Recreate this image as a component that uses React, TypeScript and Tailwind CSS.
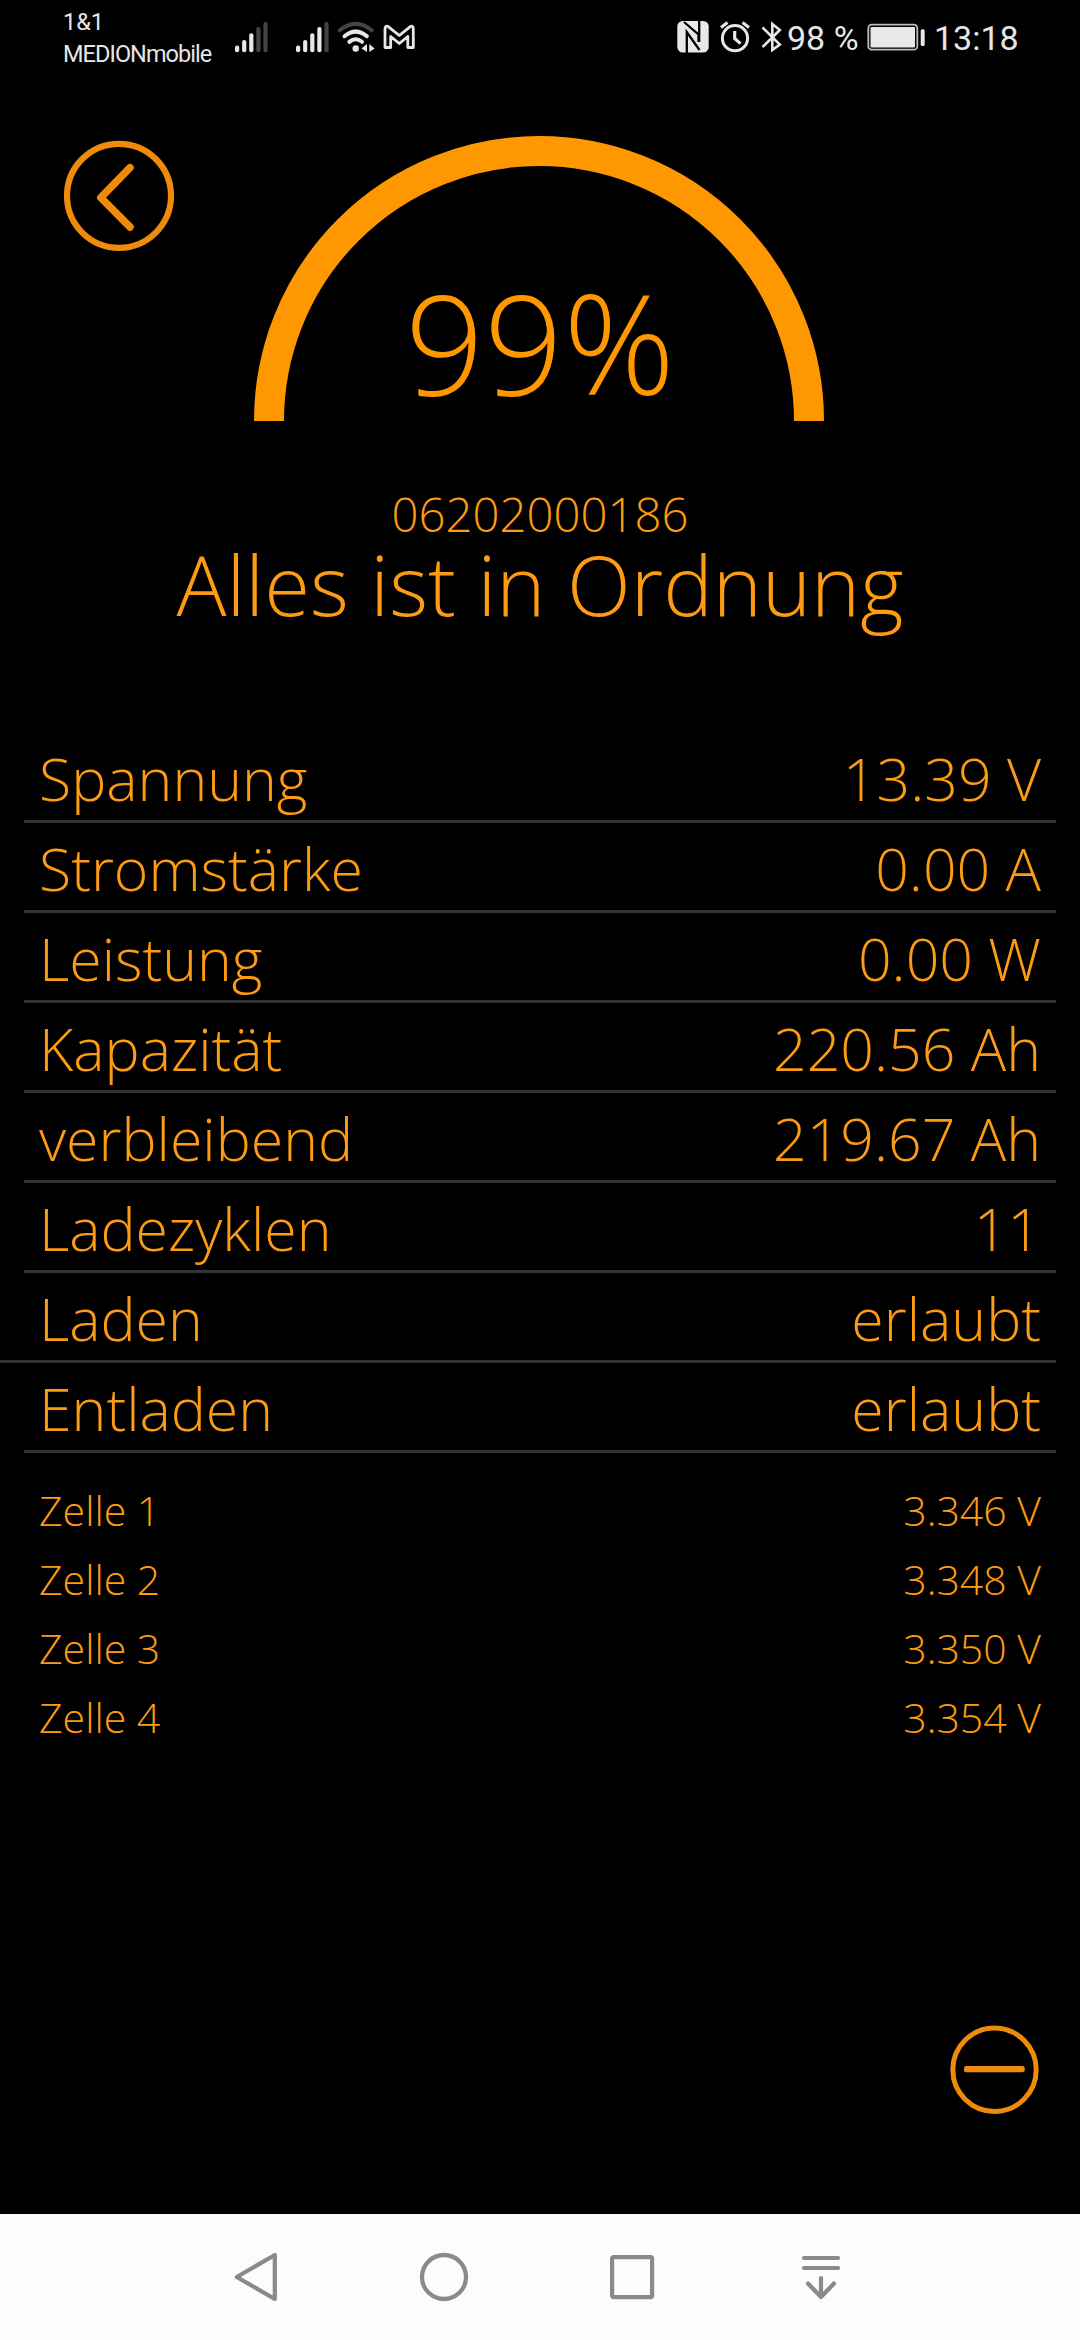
import type { ReactNode } from 'react';

const READINGS = [
  { label: 'Spannung', value: '13.39 V' },
  { label: 'Stromstärke', value: '0.00 A' },
  { label: 'Leistung', value: '0.00 W' },
  { label: 'Kapazität', value: '220.56 Ah' },
  { label: 'verbleibend', value: '219.67 Ah' },
  { label: 'Ladezyklen', value: '11' },
  { label: 'Laden', value: 'erlaubt', fullBleed: true },
  { label: 'Entladen', value: 'erlaubt' },
];

const CELLS = [
  { label: 'Zelle 1', value: '3.346 V' },
  { label: 'Zelle 2', value: '3.348 V' },
  { label: 'Zelle 3', value: '3.350 V' },
  { label: 'Zelle 4', value: '3.354 V' },
];

const SIGNAL_TOPS = [45.5, 40, 33.3, 27, 22];

function Signal({ level }: { level: number }) {
  return (
    <svg width="33" height="76" viewBox="0 0 33 76">
      {SIGNAL_TOPS.map((top, i) => (
        <rect
          key={top}
          x={i * 7.1}
          y={top}
          width="4.2"
          height={52.3 - top}
          rx="2"
          fill={i < level ? '#e8e8e8' : '#444'}
        />
      ))}
    </svg>
  );
}

function StatusBar() {
  return (
    <div className="flex h-[76px] items-center pl-[63px] font-[Roboto,sans-serif] font-normal text-[#e6e6e6]">
      <div className="w-[172px] text-[23.5px] leading-8 whitespace-nowrap">
        <div>1&amp;1</div>
        <div className="tracking-[-0.95px]">MEDIONmobile</div>
      </div>
      <Signal level={3} />
      <div className="ml-7">
        <Signal level={4} />
      </div>

      {/* Wi-Fi with traffic arrows */}
      <svg className="ml-2" width="38" height="76" viewBox="0 0 38 76" fill="none" strokeWidth="4" strokeLinecap="round">
        <path d="M2.7 30.3Q18.7 17.5 34.7 30.3" stroke="#444" />
        <path d="M7.5 36.2Q18.7 27 29.9 36.2" stroke="#e8e8e8" />
        <path d="M12.3 41.8Q18.7 36.8 25 41.8" stroke="#e8e8e8" />
        <circle cx="18.7" cy="48.5" r="3.2" fill="#e8e8e8" />
        <path d="M30 44V52L24.5 48.6ZM32.3 44V52L37.6 48.6Z" fill="#e8e8e8" />
      </svg>

      {/* Mail */}
      <svg className="ml-2" width="33" height="76" viewBox="0 0 33 76" fill="none" stroke="#e8e8e8" strokeWidth="2.8" strokeLinejoin="round">
        <path d="M2 47.5V29Q2 25 5.5 26.8L16.3 35.5L27 26.8Q30.3 25 30.3 29V47.5H24.8V36.5L16.3 43.5L7.7 36.5V47.5Z" />
      </svg>

      {/* NFC */}
      <svg className="ml-[261px]" width="32" height="76" viewBox="0 0 32 76">
        <rect x="0.3" y="21" width="31.4" height="31.6" rx="5.5" fill="#e8e8e8" />
        <path d="M7 22L21.5 34.5V42M9.8 53V32L22.5 50M22.2 20.5V42" fill="none" stroke="#000" strokeWidth="2.3" />
      </svg>

      {/* Alarm */}
      <svg className="ml-[11px]" width="30" height="76" viewBox="0 0 30 76" fill="none" stroke="#e8e8e8" strokeWidth="3">
        <circle cx="15" cy="38.2" r="12.6" />
        <path d="M14.7 31V38.5L20.5 43.6" strokeWidth="3.2" />
        <path d="M1 27.5L7.5 22.5M22.5 22.5L29 27.5" />
      </svg>

      {/* Bluetooth */}
      <svg className="ml-[11px]" width="21" height="76" viewBox="0 0 21 76" fill="none" stroke="#e8e8e8" strokeWidth="2.6">
        <path d="M1.5 27.5L18.8 44.6L11.3 50V24L18.8 30L1.5 47" />
      </svg>

      <span className="ml-[5px] w-[80px] text-[34px] whitespace-nowrap">98 %</span>

      {/* Battery */}
      <svg width="58" height="76" viewBox="0 0 58 76">
        <rect x="1.3" y="24.7" width="49" height="25" rx="3.5" fill="none" stroke="#bdbdbd" strokeWidth="1.8" />
        <rect x="3.5" y="27" width="44.5" height="20.5" rx="1" fill="#e8e8e8" />
        <rect x="53.7" y="29.3" width="4" height="16.7" rx="1.5" fill="#e8e8e8" />
      </svg>

      <span className="ml-[9px] text-[34px]">13:18</span>
    </div>
  );
}

function Gauge({ children }: { children: ReactNode }) {
  return (
    <div className="relative mt-[60px] ml-[80px] flex h-[285px] w-[570px] items-end justify-center">
      <svg className="absolute inset-0" width="570" height="285" viewBox="0 0 570 285" fill="none">
        <path d="M15 285A270 270 0 0 1 555 285" stroke="#ff9800" strokeWidth="30" />
      </svg>
      {children}
    </div>
  );
}

function NavBar() {
  return (
    <nav className="flex h-[126px] items-center bg-[#fcfcfc] pl-[232px]">
      <svg width="48" height="52" viewBox="0 0 48 52" fill="none" stroke="#8a8a8a" strokeWidth="4.2" strokeLinejoin="round">
        <path d="M42.8 4V48L4.8 26Z" />
      </svg>
      <svg className="ml-[138px]" width="52" height="52" viewBox="0 0 52 52" fill="none" stroke="#8a8a8a" strokeWidth="4.3">
        <circle cx="26" cy="26" r="22" />
      </svg>
      <svg className="ml-[136px]" width="52" height="52" viewBox="0 0 52 52" fill="none" stroke="#8a8a8a" strokeWidth="4.2">
        <rect x="6.1" y="6.1" width="40" height="40" rx="1.5" />
      </svg>
      <svg className="ml-[137px]" width="52" height="52" viewBox="0 0 52 52" fill="none" stroke="#8a8a8a" strokeWidth="4.2" strokeLinecap="round" strokeLinejoin="round">
        <path d="M9 7H43M9 17H43M26 27V46M13 32.5L26 46L39 32.5" />
      </svg>
    </nav>
  );
}

export default function App() {
  return (
    <div className="flex h-[2340px] w-[1080px] flex-col bg-black font-['Open_Sans',sans-serif] font-light text-[#fd9c12]">
      <StatusBar />

      <header className="flex items-start">
        <button className="mt-[64px] ml-16">
          <svg width="110" height="111" viewBox="0 0 110 111" fill="none" stroke="#ee8b0b">
            <circle cx="55" cy="55.8" r="52" strokeWidth="6.2" />
            <path d="M66 27.7L36.8 57.7L66 87" strokeWidth="7.5" strokeLinecap="round" strokeLinejoin="round" />
          </svg>
        </button>
        <Gauge>
          <span className="pb-[4px] pl-[2px] text-[138.5px] leading-[150px] text-[#ff9800]">99%</span>
        </Gauge>
      </header>

      <div className="mt-[67px] flex flex-col items-center">
        <p className="text-[47.3px] leading-[52px]">06202000186</p>
        <p className="text-[83.3px] leading-[87px]">Alles ist in Ordnung</p>
      </div>

      <div className="mt-[106px] mr-6 flex flex-col">
        {READINGS.map(({ label, value, fullBleed }) => (
          <div
            key={label}
            className={`flex h-[90px] justify-between border-b-3 border-[#333] pt-[3px] pr-[15px] text-[59px] leading-[84px] ${
              fullBleed ? 'pl-[39px]' : 'ml-6 pl-[15px]'
            }`}
          >
            <span>{label}</span>
            <span>{value}</span>
          </div>
        ))}
      </div>

      <div className="mt-[23px] flex flex-col px-[39px] text-[41px] leading-[69px]">
        {CELLS.map(({ label, value }) => (
          <div key={label} className="flex justify-between">
            <span>{label}</span>
            <span>{value}</span>
          </div>
        ))}
      </div>

      <div className="mt-auto mb-[99px] flex justify-end pr-10">
        <button>
          <svg width="90" height="90" viewBox="0 0 90 90" fill="none">
            <circle cx="44.5" cy="44.8" r="41.7" stroke="#ee8b0b" strokeWidth="5" />
            <rect x="14" y="41" width="60.7" height="6.2" rx="2" fill="#ee8b0b" />
          </svg>
        </button>
      </div>

      <NavBar />
    </div>
  );
}
